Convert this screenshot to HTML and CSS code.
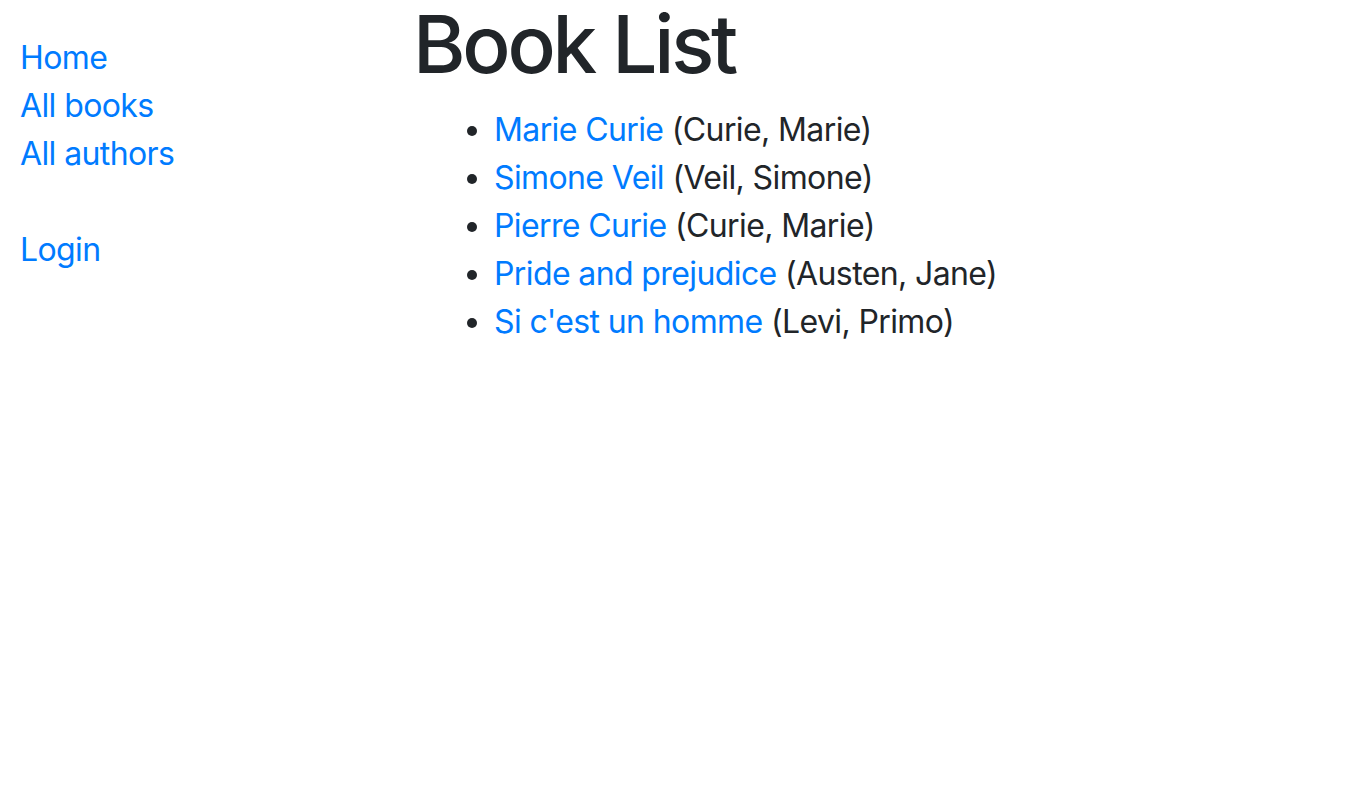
FILE: index.html
```html
<!DOCTYPE html>
<html lang="en">
<head>
<meta charset="utf-8">
<title>Local Library</title>
<link rel="stylesheet" href="styles.css">
</head>
<body>
<div class="page">
  <nav class="sidebar">
    <ul class="sidebar-nav">
      <li><a href="#">Home</a></li>
      <li><a href="#">All books</a></li>
      <li><a href="#">All authors</a></li>
      <li class="gap"><a href="#">Login</a></li>
    </ul>
  </nav>
  <main class="content">
    <h1 class="title">Book List</h1>
    <ul class="book-list">
      <li><a href="#">Marie Curie</a> (Curie, Marie)</li>
      <li><a href="#">Simone Veil</a> (Veil, Simone)</li>
      <li><a href="#">Pierre Curie</a> (Curie, Marie)</li>
      <li><a href="#">Pride and prejudice</a> (Austen, Jane)</li>
      <li><a href="#">Si c'est un homme</a> (Levi, Primo)</li>
    </ul>
  </main>
</div>
</body>
</html>
```
FILE: styles.css
```css
html, body {
  margin: 0;
  padding: 0;
  background: #fff;
}
body {
  font-family: Inter, "Liberation Sans", sans-serif;
  font-size: 32px;
  line-height: 48px;
  letter-spacing: -0.019em;
  color: #212529;
}
a {
  color: #007bff;
  text-decoration: none;
}
.page {
  display: flex;
  align-items: flex-start;
}
.sidebar {
  width: 394px;
  flex: none;
  padding-left: 20px;
  padding-top: 34px;
  box-sizing: border-box;
}
.sidebar-nav {
  list-style: none;
  margin: 0;
  padding: 0;
}
.sidebar-nav .gap {
  margin-top: 48px;
}
.content {
  flex: 1;
  padding-left: 19px;
}
.title {
  margin: 4px 0 22px;
  font-size: 80px;
  line-height: 80px;
  font-weight: 500;
  letter-spacing: -0.04em;
}
.book-list {
  margin: 0;
  padding-left: 81px;
}
```
